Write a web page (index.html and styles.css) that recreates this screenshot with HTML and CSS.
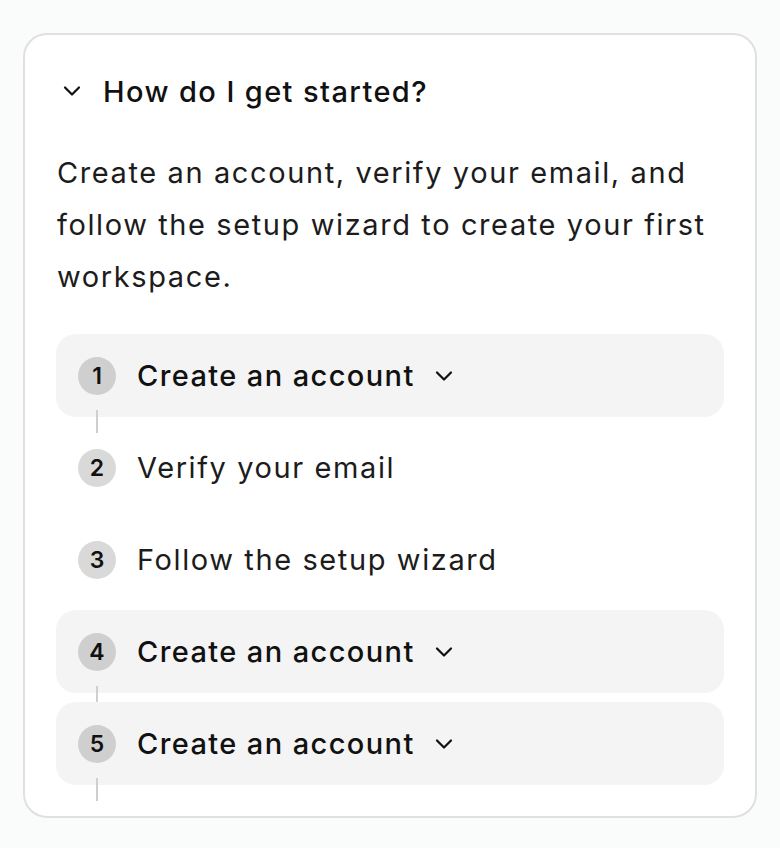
FILE: index.html
```html
<!DOCTYPE html>
<html lang="en">
<head>
<meta charset="utf-8">
<title>FAQ</title>
<link rel="stylesheet" href="styles.css">
</head>
<body>
<div class="card">
  <div class="faq-head">
    <svg class="chev-lg" width="20" height="12" viewBox="0 0 20 12"><polyline points="3,2.5 10,9.5 17,2.5" fill="none" stroke="#111" stroke-width="2.2" stroke-linecap="round" stroke-linejoin="round"/></svg>
    <span class="faq-title">How do I get started?</span>
  </div>
  <p class="faq-body">Create an account, verify your email, and follow the setup wizard to create your first workspace.</p>
  <div class="steps">
    <div class="step open">
      <span class="num">1</span>
      <span class="label">Create an account</span>
      <svg class="chev" width="20" height="12" viewBox="0 0 20 12"><polyline points="3,2.5 10,9.5 17,2.5" fill="none" stroke="#111" stroke-width="2.2" stroke-linecap="round" stroke-linejoin="round"/></svg>
      <span class="line"></span>
    </div>
    <div class="step">
      <span class="num">2</span>
      <span class="label">Verify your email</span>
    </div>
    <div class="step">
      <span class="num">3</span>
      <span class="label">Follow the setup wizard</span>
    </div>
    <div class="step open">
      <span class="num">4</span>
      <span class="label">Create an account</span>
      <svg class="chev" width="20" height="12" viewBox="0 0 20 12"><polyline points="3,2.5 10,9.5 17,2.5" fill="none" stroke="#111" stroke-width="2.2" stroke-linecap="round" stroke-linejoin="round"/></svg>
      <span class="line"></span>
    </div>
    <div class="step open">
      <span class="num">5</span>
      <span class="label">Create an account</span>
      <svg class="chev" width="20" height="12" viewBox="0 0 20 12"><polyline points="3,2.5 10,9.5 17,2.5" fill="none" stroke="#111" stroke-width="2.2" stroke-linecap="round" stroke-linejoin="round"/></svg>
      <span class="line"></span>
    </div>
  </div>
</div>
</body>
</html>
```

FILE: styles.css
```css
html, body {
  margin: 0;
  padding: 0;
  background: #fafcfb;
}
body {
  font-family: Inter, "Noto Sans", sans-serif;
  color: #111;
  padding: 33px 23px 30px 23px;
}
.card {
  background: #ffffff;
  border: 2px solid #e0e0e0;
  border-radius: 24px;
  padding: 34px 31px 31px 31px;
}
.faq-head {
  display: flex;
  align-items: center;
  height: 44px;
  padding-left: 6px;
}
.chev-lg {
  margin-right: 21px;
}
.faq-title {
  font-size: 29px;
  font-weight: 500;
  letter-spacing: 1.4px;
}
.faq-body {
  margin: 34px 0 31px 1px;
  font-size: 29px;
  line-height: 52px;
  letter-spacing: 1.6px;
  color: #1c1c1c;
}
.steps {
  display: flex;
  flex-direction: column;
  gap: 9px;
}
.step {
  position: relative;
  display: flex;
  align-items: center;
  height: 83px;
  padding-left: 22px;
  border-radius: 20px;
}
.step.open {
  background: #f4f4f4;
}
.num {
  width: 38px;
  height: 38px;
  border-radius: 50%;
  background: rgba(0, 0, 0, 0.15);
  display: flex;
  align-items: center;
  justify-content: center;
  font-size: 23px;
  font-weight: 600;
  color: #111;
  margin-right: 21px;
}
.label {
  font-size: 29px;
  letter-spacing: 1.6px;
  color: #1c1c1c;
}
.step.open .label {
  font-weight: 500;
  letter-spacing: 1.4px;
  color: #111;
}
.chev {
  margin-left: 19px;
}
.line {
  position: absolute;
  left: 40px;
  bottom: -16px;
  width: 2px;
  height: 23px;
  background: #cfcfcf;
}
```
